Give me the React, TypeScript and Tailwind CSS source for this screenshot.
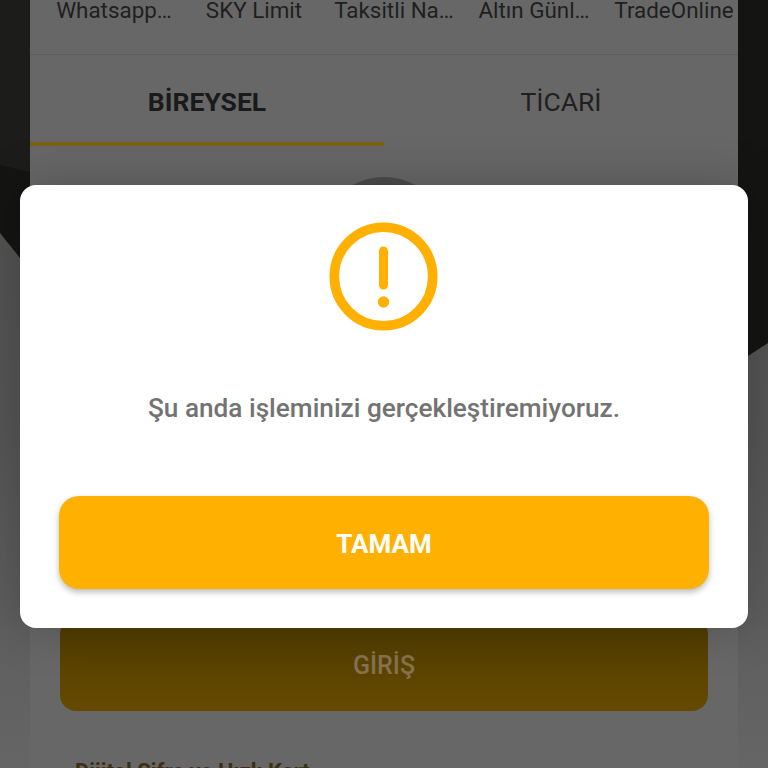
export default function App() {
  const apps = ["Whatsapp…", "SKY Limit", "Taksitli Na…", "Altın Günl…", "TradeOnline"];
  return (
    <div className="relative h-[768px] w-[768px] overflow-hidden bg-[#5f5f5f] font-['Roboto',sans-serif]">
      <svg className="absolute inset-0" width="768" height="768" viewBox="0 0 768 768">
        <defs>
          <linearGradient id="side" x1="0" y1="0" x2="0" y2="1">
            <stop offset="0" stopColor="#4f4f4f" />
            <stop offset="0.55" stopColor="#555555" />
            <stop offset="1" stopColor="#656565" />
          </linearGradient>
        </defs>
        <rect width="768" height="768" fill="url(#side)" />
        <path d="M0 0H30V258H20L0 233Z" fill="#141412" />
        <path d="M0 0H30V172L0 165Z" fill="#1c1c1a" />
        <path d="M738 0H768V343L748 356H738Z" fill="#141412" />
      </svg>
      <div className="relative mx-[30px] flex h-[768px] flex-col overflow-hidden bg-[#676767]">
        <div className="flex h-[55px] shrink-0 border-b border-[#5d5d5d] pl-[14px]">
          {apps.map((a) => (
            <div key={a} className="flex h-[21px] w-[140px] shrink-0 items-center justify-center whitespace-nowrap text-[22.4px] leading-[21px] text-[#1f1f1f]">
              {a}
            </div>
          ))}
        </div>
        <div className="flex h-[91px] shrink-0">
          <div className="flex w-[354px] items-center justify-center border-b-4 border-[#7d5f1c] pt-[7px] text-[26.5px] font-bold text-[#1a1a1a]">
            BİREYSEL
          </div>
          <div className="flex w-[354px] items-center justify-center pt-[3px] text-[26.5px] text-[#1f1f1f]">
            TİCARİ
          </div>
        </div>
        <div className="mx-auto mt-[31px] h-[130px] w-[130px] shrink-0 rounded-full bg-[#4c4c4c]" />
        <div className="h-[311px] shrink-0" />
        <div className="mx-[30px] flex h-[93px] shrink-0 items-center justify-center rounded-2xl bg-gradient-to-b from-[#4f3c00] to-[#664a00] pt-[2px] text-[25px] font-medium text-[#857350]">
          GİRİŞ
        </div>
        <div className="ml-[45px] mt-[48px] whitespace-nowrap text-[22px] font-bold leading-[26px] text-[#3f2f12]">
          Dijital Şifre ve Hızlı Kart
        </div>
      </div>
      <div className="absolute left-[20px] top-[185px] flex h-[443px] w-[728px] flex-col items-center rounded-2xl bg-white px-[39px] pt-[37px] shadow-[0_0_50px_rgba(0,0,0,0.22)]">
        <svg width="110" height="110" viewBox="0 0 110 110" className="shrink-0">
          <circle cx="54.5" cy="54.5" r="49.2" fill="none" stroke="#ffb000" strokeWidth="9.6" />
          <line x1="54.5" y1="29" x2="54.5" y2="63" stroke="#ffb000" strokeWidth="9" strokeLinecap="round" />
          <circle cx="54.5" cy="80" r="5.7" fill="#ffb000" />
        </svg>
        <p className="mt-[60px] h-[32px] whitespace-nowrap text-[26.2px] font-medium leading-[32px] text-[#737373]">
          Şu anda işleminizi gerçekleştiremiyoruz.
        </p>
        <button className="mt-[72px] flex h-[93px] w-[650px] shrink-0 items-center justify-center rounded-[20px] bg-[#ffb000] pt-[3px] text-[26px] font-bold text-white shadow-[0_3px_6px_rgba(0,0,0,0.28)]">
          TAMAM
        </button>
      </div>
    </div>
  );
}
